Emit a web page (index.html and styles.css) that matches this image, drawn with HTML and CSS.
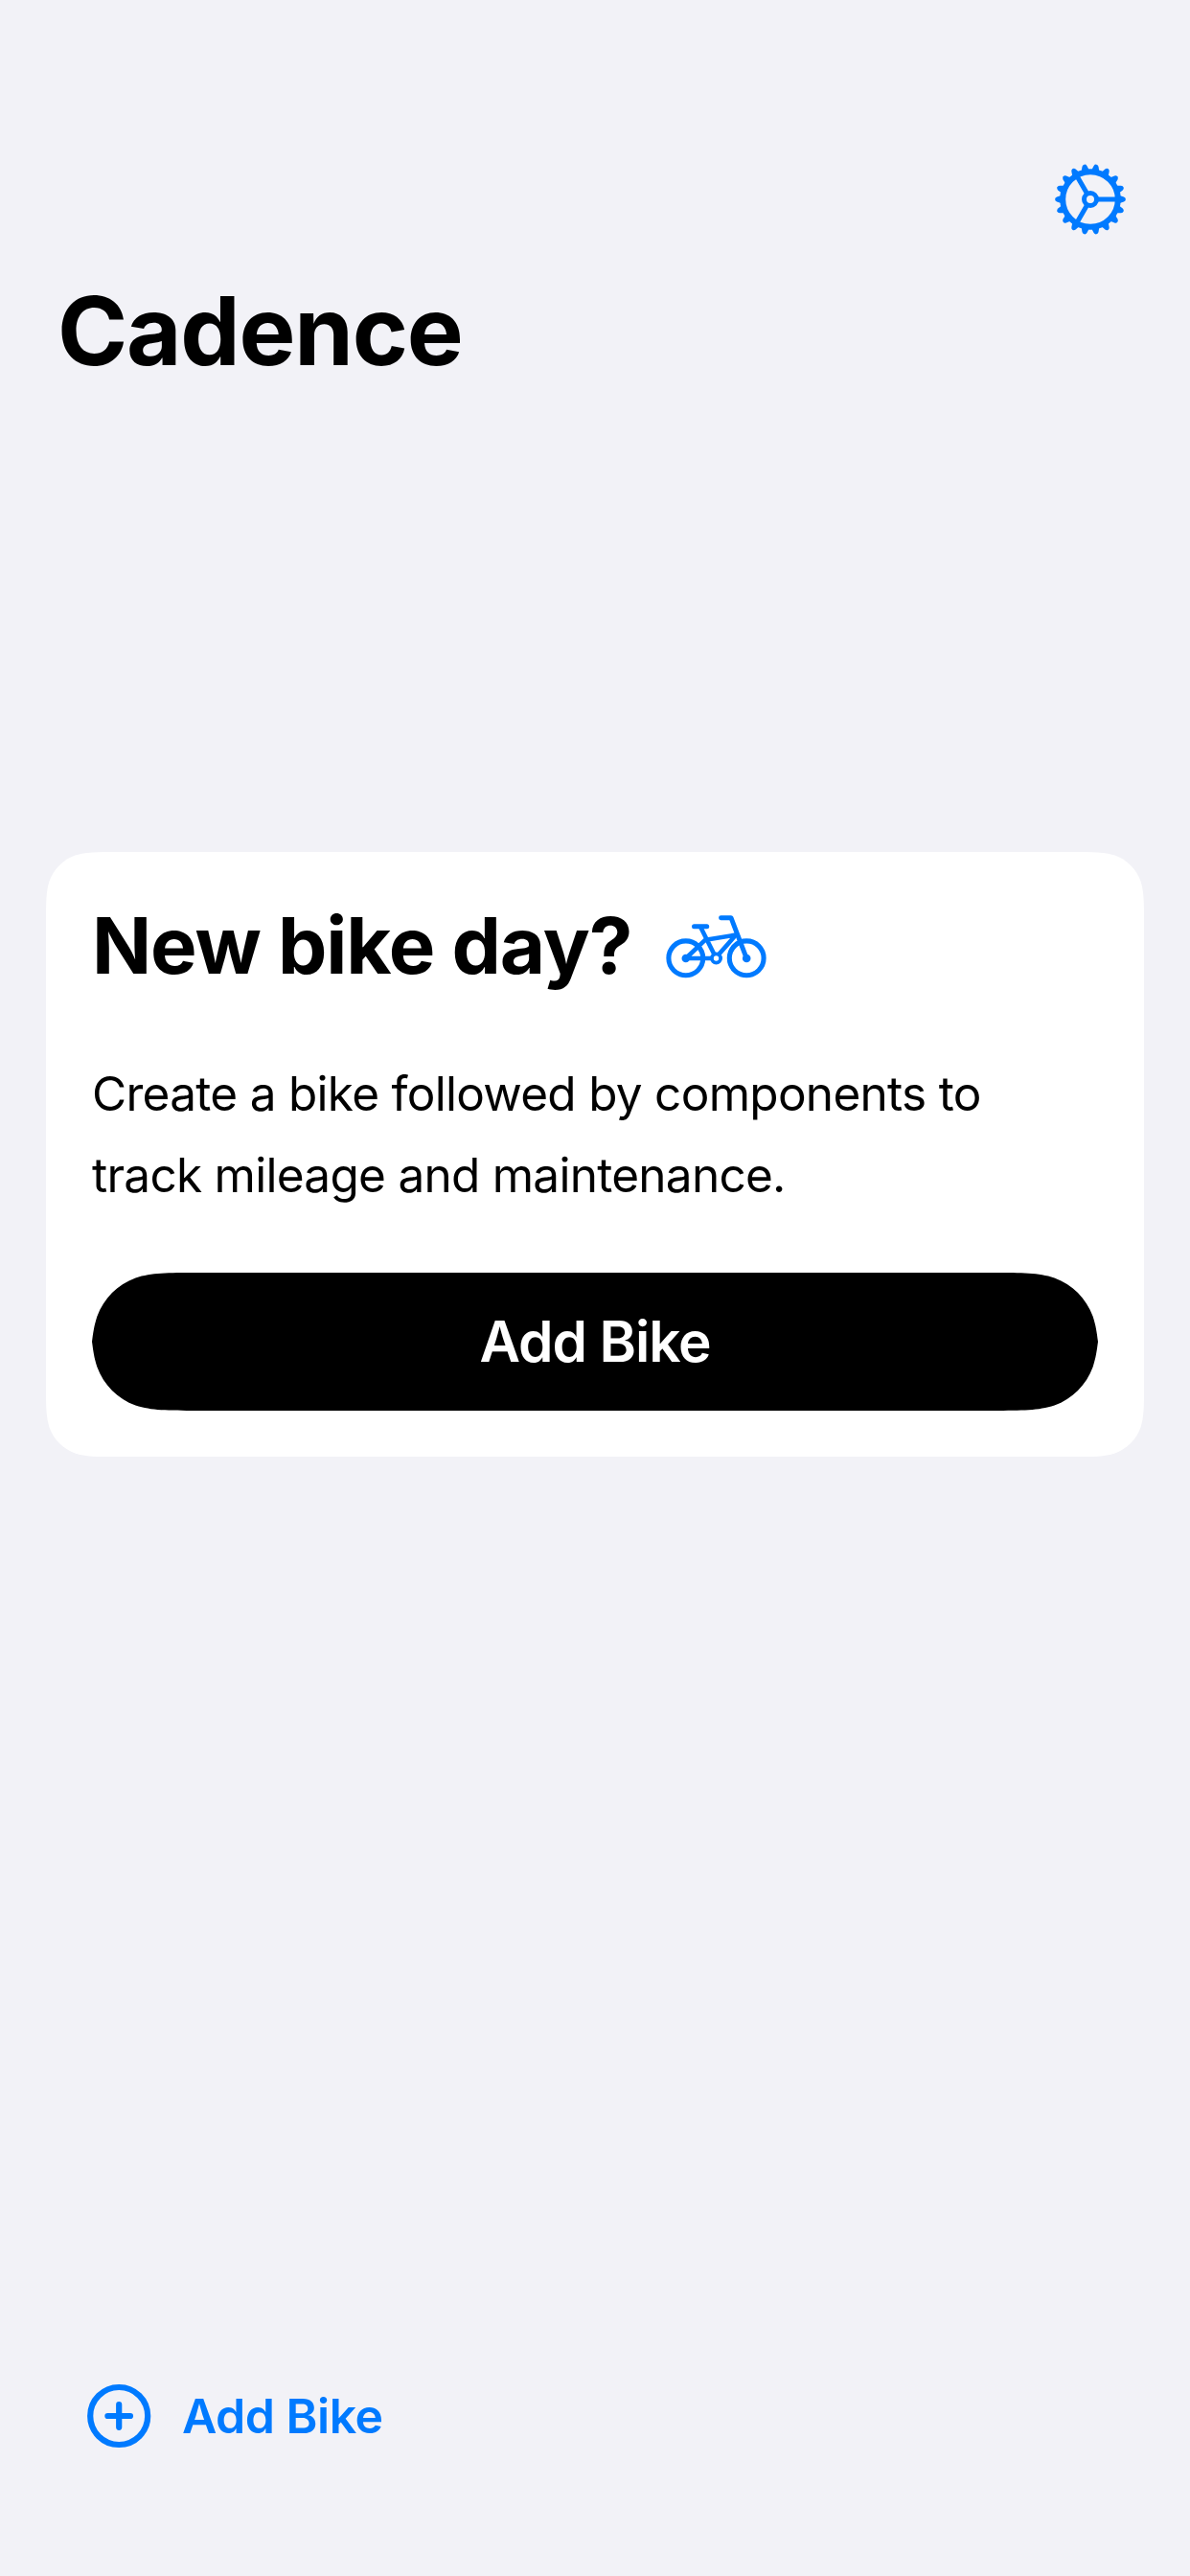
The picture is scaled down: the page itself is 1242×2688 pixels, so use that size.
FILE: index.html
```html
<!DOCTYPE html>
<html lang="en">
<head>
<meta charset="utf-8">
<title>Cadence</title>
<link rel="stylesheet" href="styles.css">
</head>
<body>
<div class="screen">
  <header class="header">
    <button class="settings" aria-label="Settings">
      <svg class="gear" viewBox="-38 -38 76 76" aria-hidden="true">
        <defs>
          <path id="tooth" d="M30-4.2 L35-2.5 Q36.9-1.8 36.9 0 Q36.9 1.8 35 2.5 L30 4.2Z"/>
          <g id="teeth">
            <use href="#tooth"/>
            <use href="#tooth" transform="rotate(20)"/>
            <use href="#tooth" transform="rotate(40)"/>
            <use href="#tooth" transform="rotate(60)"/>
            <use href="#tooth" transform="rotate(80)"/>
            <use href="#tooth" transform="rotate(100)"/>
          </g>
        </defs>
        <g fill="currentColor">
          <use href="#teeth"/>
          <use href="#teeth" transform="rotate(120)"/>
          <use href="#teeth" transform="rotate(240)"/>
        </g>
        <g fill="none" stroke="currentColor">
          <circle r="28.8" stroke-width="6"/>
          <circle r="6.5" stroke-width="5"/>
          <path stroke-width="5" d="M8 0H28M-4-6.93L-14-24.25M-4 6.93L-14 24.25"/>
        </g>
      </svg>
    </button>
    <h1 class="title">Cadence</h1>
  </header>
  <main class="content">
    <section class="card">
      <div class="card-heading">
        <h2 class="card-title">New bike day?</h2>
        <svg class="bike" viewBox="0 0 106 66" fill="none" stroke="currentColor" stroke-width="4.6" stroke-linecap="round" stroke-linejoin="round" aria-hidden="true">
          <circle cx="20.8" cy="44.8" r="17.9" stroke-width="5.1"/>
          <circle cx="84.2" cy="44.8" r="17.9" stroke-width="5.1"/>
          <circle cx="20.8" cy="45" r="4.3" fill="currentColor" stroke="none"/>
          <circle cx="84.2" cy="45" r="4.3" fill="currentColor" stroke="none"/>
          <circle cx="52.5" cy="45" r="4.6" stroke-width="3.8"/>
          <path d="M47 45H20.8L41.5 25.3M36.5 13L50 40M43 25.4L73 20.6L55.5 40.5"/>
          <path stroke-width="5" d="M29.5 11.7H42.7"/>
          <path stroke-width="4.9" d="M57.5 2.7H68L84.2 45"/>
        </svg>
      </div>
      <p class="card-text"><span class="line first">Create a bike followed by components to</span> <span class="line second">track mileage and maintenance.</span></p>
      <button class="primary">Add Bike</button>
    </section>
  </main>
  <footer class="toolbar">
    <button class="add">
      <svg class="plus" viewBox="0 0 68 68" fill="none" stroke="currentColor" stroke-width="6.2" stroke-linecap="round" aria-hidden="true">
        <circle cx="34.2" cy="34" r="30"/>
        <path d="M22.4 34H46M34.2 22.2V45.8"/>
      </svg>
      <span class="add-label">Add Bike</span>
    </button>
  </footer>
</div>
</body>
</html>
```

FILE: styles.css
```css
* { box-sizing: border-box; }

body {
  margin: 0;
  background: #f2f2f7;
  color: #000;
  font-family: Inter, "Liberation Sans", sans-serif;
}

button {
  padding: 0;
  border: 0;
  background: none;
  color: #007aff;
  font: inherit;
}

h1, h2, p { margin: 0; }

svg { display: block; }

.screen {
  display: flex;
  flex-direction: column;
  width: 1242px;
  height: 2688px;
}

.header {
  display: flex;
  flex-direction: column;
  height: 889px;
  padding: 170px 66px 0 60px;
}

.settings { align-self: flex-end; }

.gear { width: 76px; height: 76px; }

.title {
  margin-top: 39px;
  font-size: 99px;
  font-weight: 700;
  line-height: 120px;
  letter-spacing: -1.2px;
}

.content { padding: 0 48px; }

.card {
  display: flex;
  flex-direction: column;
  height: 631px;
  padding: 48px;
  background: #fff;
  /* continuous-curvature corners, 48px radius */
  clip-path: path("M73.4 0H1072.6C1093.8 0 1104.3 0 1115.7 3.6C1128.1 8.1 1137.9 17.9 1142.4 30.3C1146 41.7 1146 52.2 1146 73.4V557.6C1146 578.8 1146 589.3 1142.4 600.7C1137.9 613.1 1128.1 622.9 1115.7 627.4C1104.3 631 1093.8 631 1072.6 631H73.4C52.2 631 41.7 631 30.3 627.4C17.9 622.9 8.1 613.1 3.6 600.7C0 589.3 0 578.8 0 557.6V73.4C0 52.2 0 41.7 3.6 30.3C8.1 17.9 17.9 8.1 30.3 3.6C41.7 0 52.2 0 73.4 0Z");
}

.card-heading {
  display: flex;
  align-items: flex-start;
  gap: 35.5px;
  height: 100px;
}

.card-title {
  font-size: 81.6px;
  font-weight: 700;
  line-height: 100px;
  letter-spacing: -1.1px;
  white-space: nowrap;
}

.bike {
  width: 106px;
  height: 66px;
  margin-top: 18px;
  color: #007aff;
}

.card-text {
  margin-top: 62px;
  font-size: 49.5px;
  line-height: 85px;
  white-space: nowrap;
}

.line { display: block; }

.first { letter-spacing: -0.71px; }

.second { letter-spacing: -0.73px; }

.primary {
  height: 144px;
  margin-top: auto;
  padding-bottom: 2px;
  background: #000;
  color: #fff;
  font-size: 58.5px;
  font-weight: 600;
  letter-spacing: -1.1px;
  clip-path: path("M110 0H940C971.6 0 987.5 0 1004.5 5.4C1023.2 12.2 1037.8 26.8 1044.6 45.5C1048 56 1048.6 62 1050 72C1048.6 82 1048 88 1044.6 98.5C1037.8 117.2 1023.2 131.8 1004.5 138.6C987.5 144 971.6 144 940 144H110C78.4 144 62.5 144 45.5 138.6C26.8 131.8 12.2 117.2 5.4 98.5C2 88 1.4 82 0 72C1.4 62 2 56 5.4 45.5C12.2 26.8 26.8 12.2 45.5 5.4C62.5 0 78.4 0 110 0Z");
}

.toolbar {
  margin-top: auto;
  padding: 0 90px 133px;
}

.add {
  display: flex;
  align-items: center;
  gap: 32px;
}

.plus { width: 68px; height: 68px; }

.add-label {
  font-size: 50px;
  font-weight: 600;
  line-height: 68px;
  letter-spacing: -0.5px;
}
```
